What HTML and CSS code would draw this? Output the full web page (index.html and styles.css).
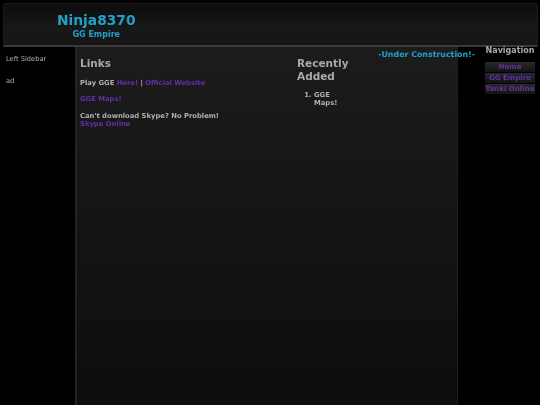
FILE: index.html
```html
<!DOCTYPE html>
<html>
<head>
<meta charset="utf-8">
<link rel="stylesheet" href="styles.css">
</head>
<body>
<div class="page">
  <header class="header">
    <div class="brand">
      <div class="title">Ninja8370</div>
      <div class="subtitle">GG Empire</div>
    </div>
  </header>
  <div class="body">
    <aside class="left">
      <p class="left-item">Left Sidebar</p>
      <p class="left-item">ad</p>
    </aside>
    <main class="center">
      <div class="notice">-Under Construction!-</div>
      <div class="cols">
        <section class="main-col">
          <h2 class="heading">Links</h2>
          <p class="line">Play GGE <a class="link" href="#">Here!</a> | <a class="link" href="#">Official Website</a></p>
          <p class="line"><a class="link" href="#">GGE Maps!</a></p>
          <p class="line">Can't download Skype? No Problem!<br><a class="link" href="#">Skype Online</a></p>
        </section>
        <section class="recent-col">
          <h2 class="heading">Recently Added</h2>
          <ol class="recent-list">
            <li>GGE Maps!</li>
          </ol>
        </section>
      </div>
    </main>
    <nav class="right">
      <div class="nav-title">Navigation</div>
      <a class="nav-btn" href="#">Home</a>
      <a class="nav-btn" href="#">GG Empire</a>
      <a class="nav-btn" href="#">Tanki Online</a>
    </nav>
  </div>
</div>
</body>
</html>
```
FILE: styles.css
```css
html, body {
  margin: 0;
  padding: 0;
  background: #000;
  height: 100%;
}
body {
  font-family: "DejaVu Sans", Verdana, sans-serif;
  color: #a8a8a8;
}
.page {
  display: flex;
  flex-direction: column;
  height: 405px;
  overflow: hidden;
  will-change: transform;
}
.header {
  margin: 3px 2px 0 3px;
  border: 1px solid #1c1c1c;
  border-bottom: 2px solid #3a3a3a;
  border-radius: 3px 3px 0 0;
  background: linear-gradient(#0c0c0c, #181818 60%, #151515);
  display: flex;
  align-items: center;
  padding-left: 53px;
  box-sizing: border-box;
  flex-shrink: 0;
  height: 44px;
}
.brand {
  display: flex;
  flex-direction: column;
  align-items: center;
  color: #22a0c8;
  font-weight: bold;
  margin-top: 4px;
}
.title {
  font-size: 13.8px;
  line-height: 16px;
  margin-bottom: 1px;
}
.subtitle {
  font-size: 8px;
  line-height: 12px;
}
.body {
  flex: 1;
  display: flex;
}
.left {
  width: 75px;
  flex-shrink: 0;
  padding: 8px 0 0 6px;
  box-sizing: border-box;
}
.left-item {
  margin: 0 0 14px;
  font-size: 6.7px;
  line-height: 8px;
  color: #b0b0b0;
}
.center {
  width: 383px;
  flex-shrink: 0;
  background: linear-gradient(#1c1c1c, #141414 50%, #0d0d0d);
  border-left: 2px solid #232323;
  border-right: 1px solid #1e1e1e;
  box-sizing: border-box;
  padding: 2px 0 0 3px;
}
.notice {
  text-align: right;
  margin-right: -18px;
  color: #22a0c8;
  font-weight: bold;
  font-size: 7.9px;
  line-height: 10px;
  margin-top: 1px;
}
.cols {
  display: flex;
  margin-top: -3px;
}
.main-col {
  width: 217px;
  flex-shrink: 0;
}
.recent-col {
  width: 50px;
}
.heading {
  margin: 0 0 9px;
  font-size: 10.5px;
  line-height: 13px;
  font-weight: bold;
  color: #a8a8a8;
}
.line {
  margin: 0 0 8px;
  font-size: 6.8px;
  line-height: 8px;
  font-weight: bold;
  color: #b0b0b0;
}
.line + .line + .line {
  margin-top: 9px;
}
.link {
  color: #6230a6;
  text-decoration: none;
}
.recent-list {
  margin: -1px 0 0;
  padding-left: 17px;
  font-size: 6.8px;
  line-height: 8px;
  font-weight: bold;
  color: #b0b0b0;
}
.right {
  flex: 1;
  display: flex;
  flex-direction: column;
  align-items: center;
  padding-left: 22px;
  box-sizing: border-box;
  gap: 1px;
  margin-top: -1px;
}
.nav-title {
  font-size: 8px;
  line-height: 10px;
  font-weight: bold;
  color: #a8a8a8;
  margin-bottom: 5px;
}
.nav-btn {
  width: 50px;
  height: 10px;
  line-height: 10px;
  font-size: 7.1px;
  font-weight: bold;
  text-align: center;
  color: #6230a6;
  text-decoration: none;
  background: linear-gradient(#2a2a2a, #121212);
  white-space: nowrap;
}
```
